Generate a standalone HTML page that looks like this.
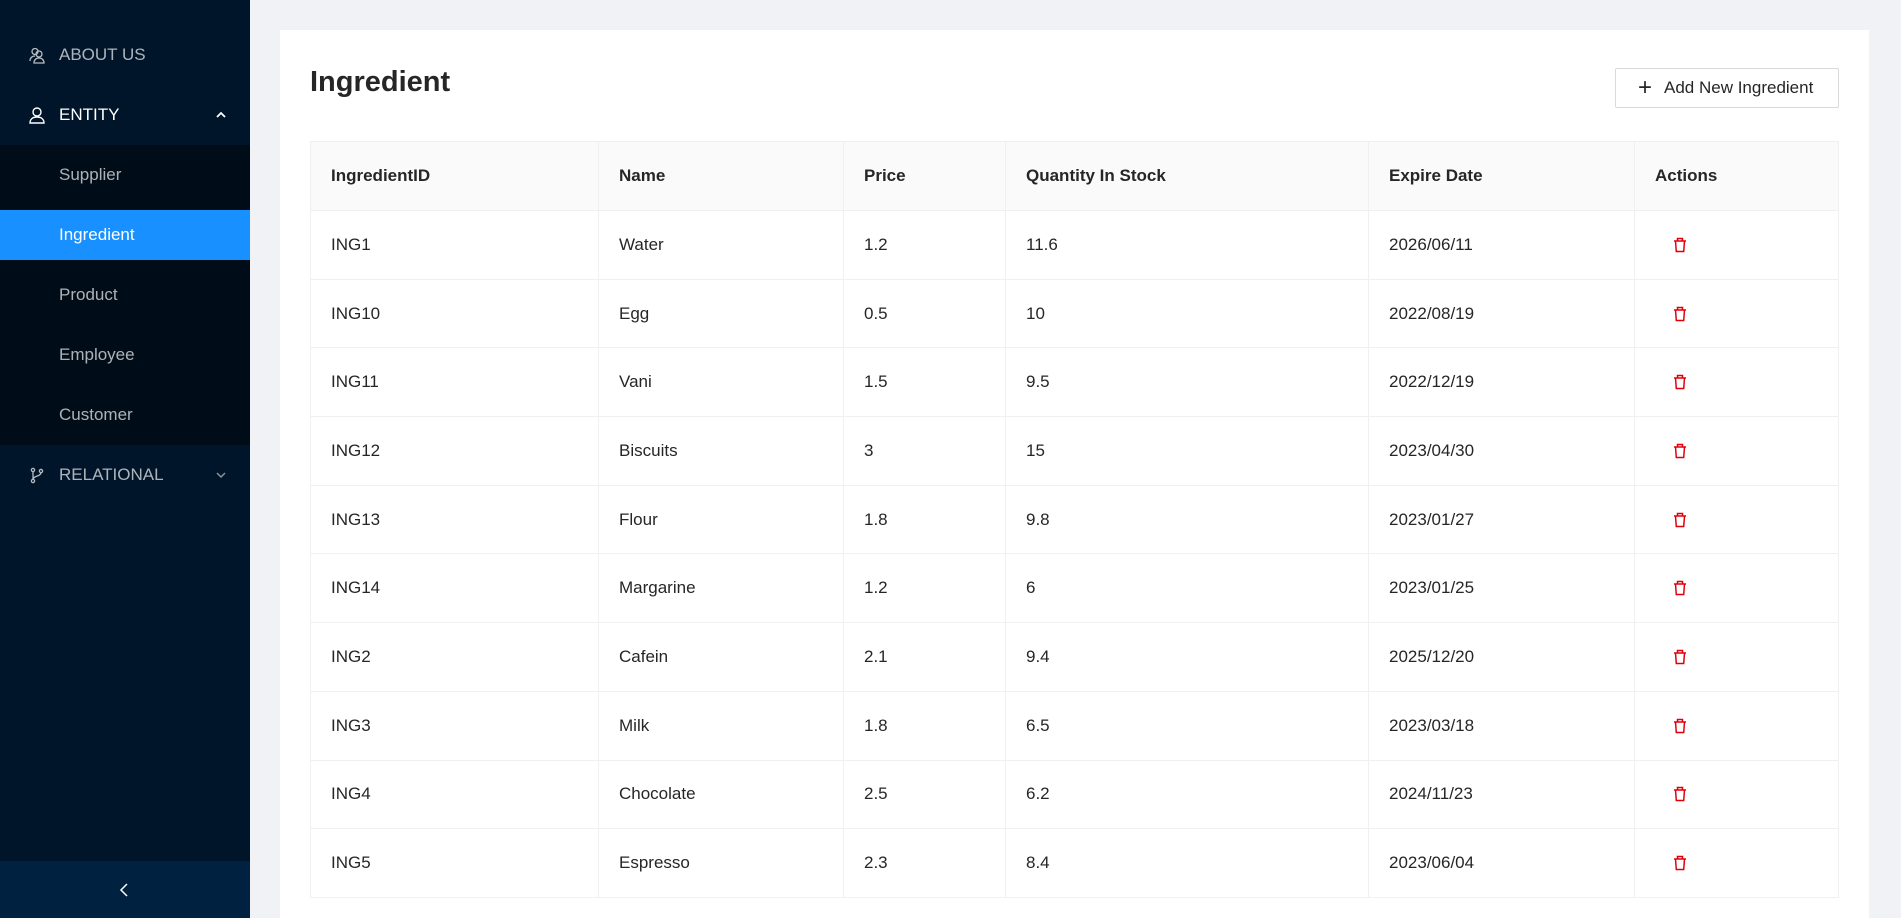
<!DOCTYPE html>
<html><head><meta charset="utf-8"><style>
*{box-sizing:border-box;margin:0;padding:0}
html,body{width:1901px;height:918px;overflow:hidden}
body{background:#f0f2f5;font-family:"Segoe UI","Liberation Sans",sans-serif;color:#262626;position:relative}
.side{position:absolute;left:0;top:0;width:250px;height:918px;background:#001529}
.it{position:absolute;left:0;width:250px;height:50px;line-height:50px;font-size:17px;color:rgba(255,255,255,.68)}
.it .t{position:absolute;left:59px}
.it svg{position:absolute;left:29px;top:17px}
.sub{position:absolute;left:0;top:145px;width:250px;height:300px;background:#000c17}
.bot{position:absolute;left:0;top:861px;width:250px;height:57px;background:#002140}
.card{position:absolute;left:280px;top:30px;width:1589px;height:888px;background:#fff}
h1{position:absolute;left:310px;top:62px;font-size:29px;font-weight:600;color:#262626;line-height:40px}
.btn{position:absolute;left:1615px;top:68px;width:224px;height:40px;border:1px solid #d9d9d9;border-radius:2px;background:#fff;font-size:17px;line-height:38px;color:#262626}
.btn .p{position:absolute;left:22px;top:0;font-size:24px;font-weight:300}
.btn .t{position:absolute;left:48px}
table{position:absolute;left:310px;top:141px;width:1529px;border-collapse:collapse;font-size:17px}
td,th{border:1px solid #f0f0f0;padding:0 0 0 20px;text-align:left;height:68.7px}
th{background:#fafafa;font-weight:600;height:69px}
</style></head><body>
<div class="side">
 <div class="it" style="top:30px"><svg width="16" height="17" viewBox="0 0 16 17" fill="none" stroke="#b6bcc4" stroke-width="1.3"><circle cx="6" cy="4.5" r="3"/><path d="M1 14c0-3 2-5 5-5"/><circle cx="10" cy="7" r="3"/><path d="M5 16c0-3 2-5 5-5s5 2 5 5z"/></svg><span class="t">ABOUT US</span></div>
 <div class="it" style="top:90px;color:#fff"><svg width="16" height="17" viewBox="0 0 16 17" fill="none" stroke="#fff" stroke-width="1.4"><circle cx="8" cy="5" r="4"/><path d="M1 16c0-4 3-6 7-6s7 2 7 6z"/></svg><span class="t">ENTITY</span><svg style="left:215px;top:21px" width="12" height="8" viewBox="0 0 12 8" fill="none" stroke="#fff" stroke-width="1.8"><path d="M2 6l4-4 4 4"/></svg></div>
 <div class="sub"></div>
 <div class="it" style="top:150px"><span class="t">Supplier</span></div>
 <div class="it" style="top:210px;background:#1890ff;color:#fff"><span class="t">Ingredient</span></div>
 <div class="it" style="top:270px"><span class="t">Product</span></div>
 <div class="it" style="top:330px"><span class="t">Employee</span></div>
 <div class="it" style="top:390px"><span class="t">Customer</span></div>
 <div class="it" style="top:450px"><svg width="16" height="17" viewBox="0 0 16 17" fill="none" stroke="#b6bcc4" stroke-width="1.3"><circle cx="4" cy="3" r="1.6"/><circle cx="4" cy="14" r="1.6"/><circle cx="12" cy="4" r="1.6"/><path d="M4 4.6v7.8M12 5.6c0 4-8 3-8 7"/></svg><span class="t">RELATIONAL</span><svg style="left:215px;top:21px" width="12" height="8" viewBox="0 0 12 8" fill="none" stroke="#8a929c" stroke-width="1.5"><path d="M2 2l4 4 4-4"/></svg></div>
 <div class="bot"><svg style="position:absolute;left:119px;top:22px" width="10" height="14" viewBox="0 0 10 14" fill="none" stroke="#fff" stroke-width="1.5"><path d="M8 1L2 7l6 6"/></svg></div>
</div>
<div class="card"></div>
<h1>Ingredient</h1>
<div class="btn"><span class="p">+</span><span class="t">Add New Ingredient</span></div>
<table>
<colgroup><col style="width:288px"><col style="width:245px"><col style="width:162px"><col style="width:363px"><col style="width:266px"><col></colgroup>
<tr><th>IngredientID</th><th>Name</th><th>Price</th><th>Quantity In Stock</th><th>Expire Date</th><th>Actions</th></tr>
<tr><td>ING1</td><td>Water</td><td>1.2</td><td>11.6</td><td>2026/06/11</td><td>T</td></tr>
<tr><td>ING10</td><td>Egg</td><td>0.5</td><td>10</td><td>2022/08/19</td><td>T</td></tr>
<tr><td>ING11</td><td>Vani</td><td>1.5</td><td>9.5</td><td>2022/12/19</td><td>T</td></tr>
<tr><td>ING12</td><td>Biscuits</td><td>3</td><td>15</td><td>2023/04/30</td><td>T</td></tr>
<tr><td>ING13</td><td>Flour</td><td>1.8</td><td>9.8</td><td>2023/01/27</td><td>T</td></tr>
<tr><td>ING14</td><td>Margarine</td><td>1.2</td><td>6</td><td>2023/01/25</td><td>T</td></tr>
<tr><td>ING2</td><td>Cafein</td><td>2.1</td><td>9.4</td><td>2025/12/20</td><td>T</td></tr>
<tr><td>ING3</td><td>Milk</td><td>1.8</td><td>6.5</td><td>2023/03/18</td><td>T</td></tr>
<tr><td>ING4</td><td>Chocolate</td><td>2.5</td><td>6.2</td><td>2024/11/23</td><td>T</td></tr>
<tr><td>ING5</td><td>Espresso</td><td>2.3</td><td>8.4</td><td>2023/06/04</td><td>T</td></tr>
</table>
<script>
document.querySelectorAll('td:last-child').forEach(function(td){td.style.paddingLeft='38px';td.innerHTML='<svg width="14" height="16" viewBox="0 0 14 16" fill="none" stroke="#e0000b" stroke-width="1.5" style="display:block"><path d="M1 4h12M4.5 4V1.5h5V4M2.5 4l.8 10.5h7.4L11.5 4"/></svg>';});
</script>
</body></html>
